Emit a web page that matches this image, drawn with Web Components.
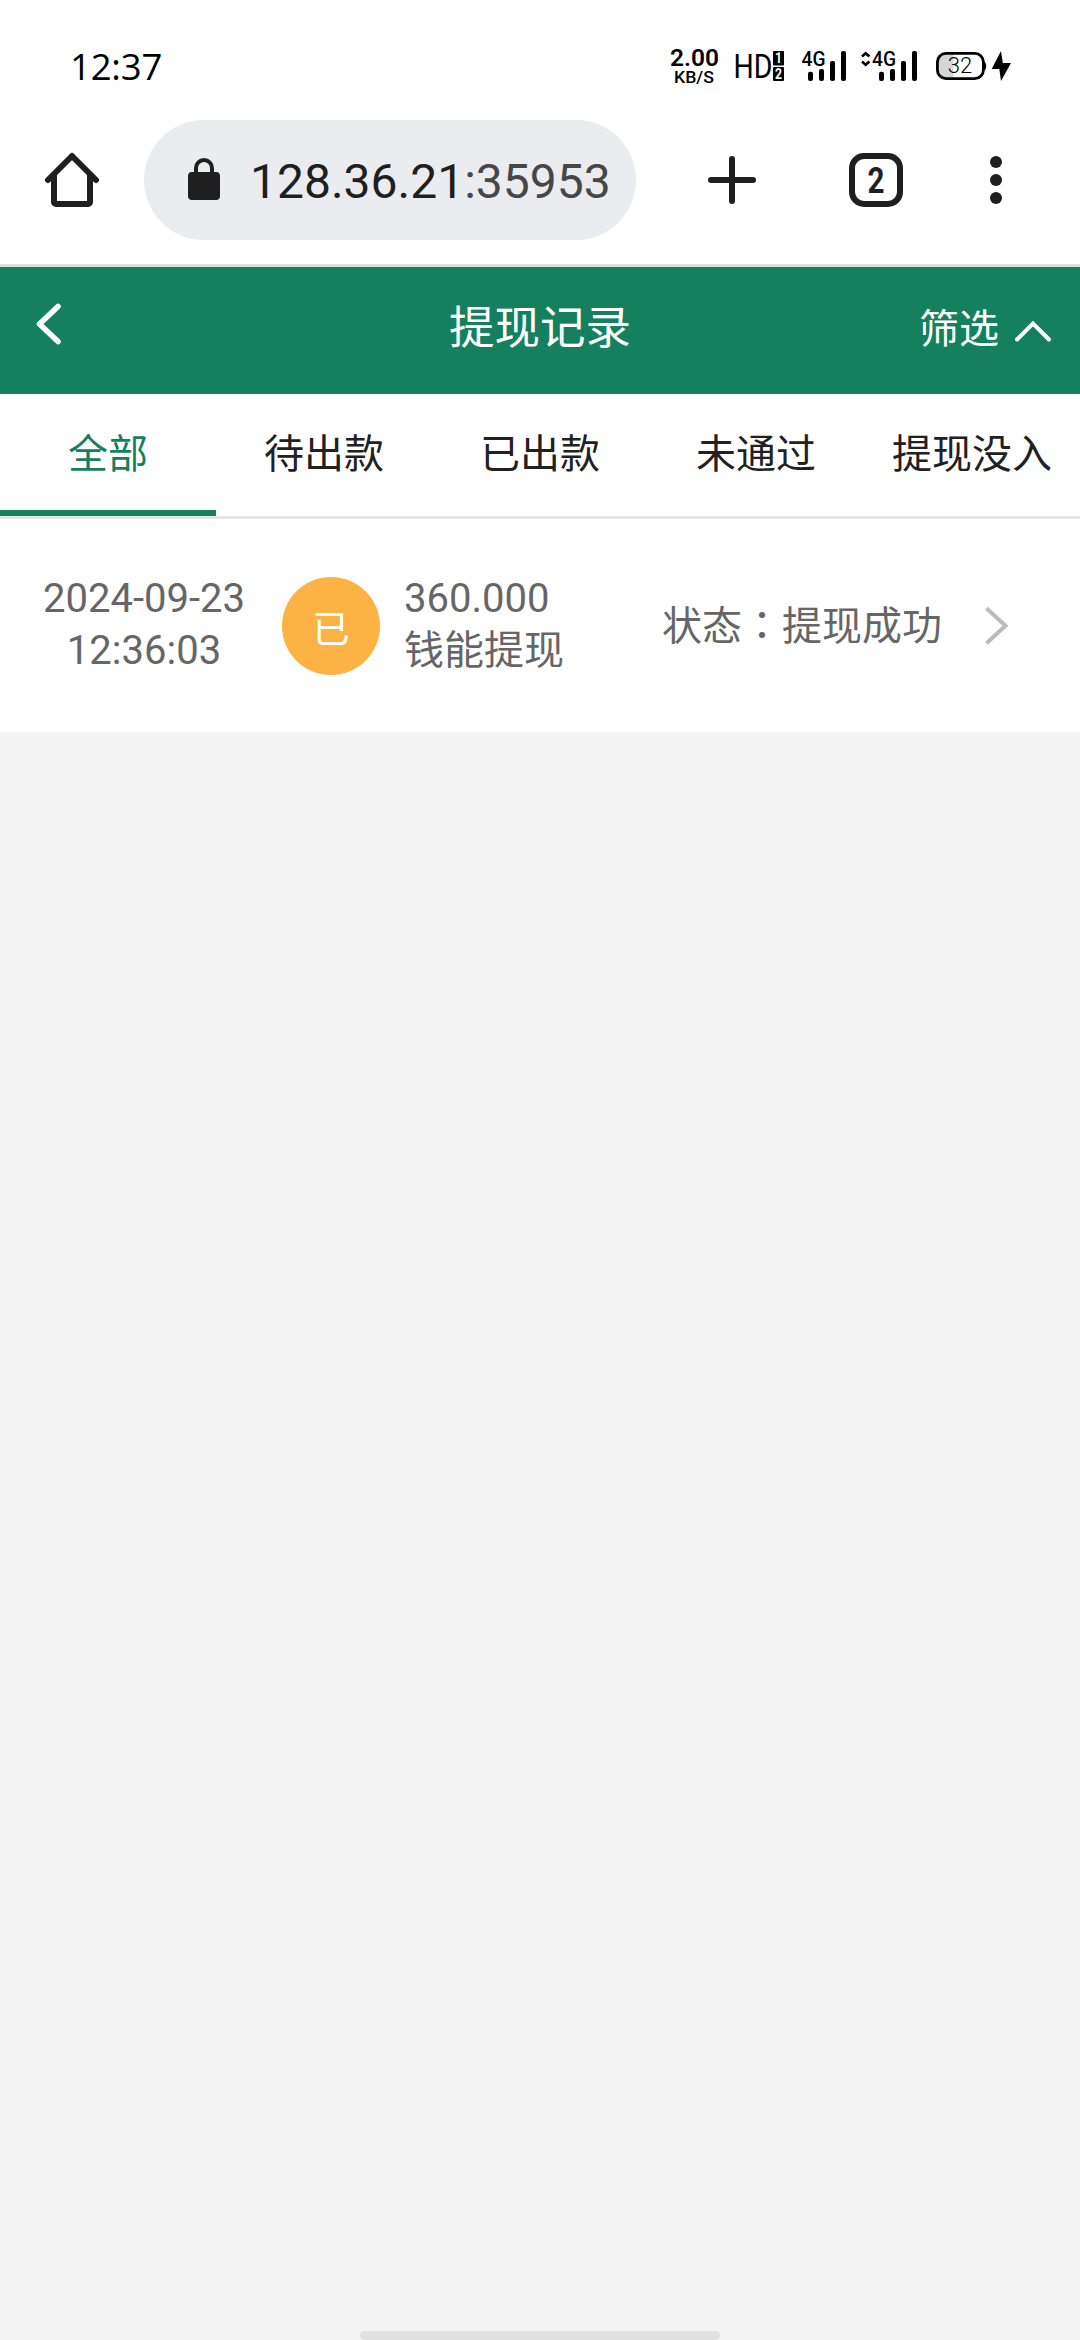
<!DOCTYPE html>
<html lang="zh-CN">
<head>
<meta charset="utf-8">
<title>提现记录</title>
<style>
html,body{margin:0;padding:0;height:100%;background:#f3f3f3}
body{font-family:Roboto,"Noto Sans CJK SC",sans-serif}
</style>
</head>
<body>
<app-screen></app-screen>
<script>
function define(name, html) {
  const t = document.createElement('template');
  t.innerHTML = html;
  customElements.define(name, class extends HTMLElement {
    constructor() {
      super();
      this.attachShadow({mode: 'open'}).appendChild(t.content.cloneNode(true));
    }
  });
}

define('status-bar', `
<style>
:host{display:flex;height:120px;background:#fff;align-items:flex-start;justify-content:space-between}
.clock{font:400 36.5px/50px "Open Sans",sans-serif;color:#000;padding:40.500px 0 0 70px;letter-spacing:-.2px}
svg{display:block;width:430px;height:120px;flex:none}
text{font-family:Roboto,sans-serif}
</style>
<div class="clock">12:37</div>
<svg viewBox="650 0 430 120">
  <text x="670" y="66" font-size="23.5" font-weight="600" textLength="49" lengthAdjust="spacingAndGlyphs">2.00</text>
  <text x="674" y="82.5" font-size="16.5" font-weight="500" textLength="40" lengthAdjust="spacingAndGlyphs">KB/S</text>
  <text x="733.5" y="78" font-size="33" textLength="39" lengthAdjust="spacingAndGlyphs">HD</text>
  <rect x="773" y="51" width="11" height="14.6" rx="1"/>
  <rect x="773" y="67" width="11" height="14" rx="1"/>
  <text x="775" y="63.200" font-size="14" font-weight="700" fill="#fff" textLength="7" lengthAdjust="spacingAndGlyphs">1</text>
  <text x="775" y="79" font-size="14" font-weight="700" fill="#fff" textLength="7" lengthAdjust="spacingAndGlyphs">2</text>
  <text x="801.5" y="65.7" font-size="19.5" font-weight="500" textLength="24" lengthAdjust="spacingAndGlyphs">4G</text>
  <g><rect x="808" y="71.7" width="5" height="9.3" rx="2"/><rect x="819" y="69" width="5" height="12" rx="2"/><rect x="830" y="61" width="5" height="20" rx="2"/><rect x="841" y="51" width="5" height="30" rx="2"/></g>
  <path d="M862 56.5l3.7-3.3 3.7 3.3M862 61.5l3.7 3.3 3.7-3.3" fill="none" stroke="#000" stroke-width="2.6"/>
  <text x="872" y="65.7" font-size="19.5" font-weight="500" textLength="24" lengthAdjust="spacingAndGlyphs">4G</text>
  <g><rect x="879" y="71.7" width="5" height="9.3" rx="2"/><rect x="890" y="69" width="5" height="12" rx="2"/><rect x="901" y="61" width="5" height="20" rx="2"/><rect x="912" y="51" width="5" height="30" rx="2"/></g>
  <path d="M953.3 54h-8a7.5 7.5 0 0 0-7.5 7.5v9a7.5 7.5 0 0 0 7.5 7.5h8z" fill="#d6d6d6"/>
  <rect x="937.4" y="53.4" width="46" height="25.2" rx="8.5" fill="none" stroke="#000" stroke-width="2.8"/>
  <path d="M983 60.5q3.2 1.5 3.2 5.5t-3.2 5.5z"/>
  <text x="960" y="73.3" font-size="22" font-weight="300" text-anchor="middle">32</text>
  <path d="M1001 51L991.7 69h7.6l1.7 12 10-18h-8.200z"/>
</svg>`);

define('browser-bar', `
<style>
:host{display:flex;height:144px;background:#fff;border-bottom:3px solid #d8e3de;box-sizing:content-box;align-items:flex-start}
svg{display:block;flex:none}
.home{width:144px;height:120px}
.pill{width:492px;height:120px;border-radius:60px;background:#ebecf0;display:flex;flex:none}
.lock{width:106px;height:120px}
.url{font:400 48px/120px Roboto,sans-serif;color:#1f1f1f;white-space:nowrap;padding-top:2px;height:118px}
.url span{color:#474747}
.tools{width:444px;height:120px}
</style>
<svg class="home" viewBox="0 120 144 120" fill="none" stroke="#1f1f1f" stroke-width="6" stroke-linejoin="round" stroke-linecap="round"><path d="M48 180L72 156L96 180"/><path d="M54 175V202a2 2 0 0 0 2 2H88a2 2 0 0 0 2-2V175"/></svg>
<div class="pill">
<svg class="lock" viewBox="144 120 106 120"><rect x="188" y="172" width="32" height="28" rx="4" fill="#1f1f1f"/><path d="M196 174v-6a8 8 0 0 1 16 0v6" fill="none" stroke="#1f1f1f" stroke-width="4"/></svg>
<div class="url">128.36.21<span>:35953</span></div>
</div>
<svg class="tools" viewBox="636 120 444 120" fill="none" stroke="#1f1f1f" stroke-width="6" stroke-linecap="round"><path d="M711 180H753M732 159V201"/><rect x="852" y="156" width="48" height="48" rx="12"/><g fill="#1f1f1f" stroke="none"><circle cx="996" cy="162" r="6"/><circle cx="996" cy="180" r="6"/><circle cx="996" cy="198" r="6"/><text x="867.500" y="193" font-family="Roboto" font-weight="700" font-size="36" textLength="17" lengthAdjust="spacingAndGlyphs">2</text></g></svg>`);

define('page-header', `
<style>
:host{display:flex;height:127px;background:#15805e;color:#fff;align-items:stretch}
svg{display:block;flex:none}
.side{flex:1 1 0;display:flex}
.right{justify-content:flex-end}
.title{font-size:45.5px;line-height:60px;padding-top:32px}
.filter{font-size:40px;line-height:60px;padding-top:33px}
</style>
<div class="side"><svg width="90" height="127" viewBox="0 267 90 127" fill="none" stroke="#fff" stroke-width="5.500" stroke-linecap="round" stroke-linejoin="round"><path d="M58 306.500L39.500 324L58 341.500"/></svg></div>
<div class="title"><slot></slot></div>
<div class="side right"><div class="filter"><slot name="action"></slot></div><svg width="81" height="127" viewBox="999 267 81 127" fill="none" stroke="#fff" stroke-width="4" stroke-linecap="round"><path d="M1017 339.500L1033 323.500L1049 339.500"/></svg></div>`);

define('tab-item', `
<style>
:host{flex:1 1 0;display:flex;justify-content:center;box-sizing:border-box;height:122px;padding-top:31px;font-size:40px;line-height:60px;color:#212121;white-space:nowrap;border-bottom:6px solid transparent}
:host([active]){color:#15805e;border-bottom-color:#15805e}
</style><slot></slot>`);

define('tab-strip', `
<style>:host{display:flex;background:#fff;border-bottom:3px solid #e5e5e5}</style><slot></slot>`);

define('record-row', `
<style>
:host{display:flex;height:213px;background:#fff;color:#666;font-size:40px;line-height:52px;align-items:flex-start;white-space:nowrap}
.when{width:204px;margin-left:42px;padding-top:54px;text-align:center}
.badge{width:98px;height:98px;border-radius:50%;background:#fdb344;color:#fff;font-size:37px;line-height:107px;text-align:center;margin:58px 24px 0 36px}
.info{padding-top:54px;width:258px}
.state{line-height:60px;padding-top:78px;width:280px}
svg{display:block;margin-left:38px}
</style>
<div class="when"><slot name="date"></slot><br><slot name="time"></slot></div>
<div class="badge"><slot name="badge"></slot></div>
<div class="info"><slot name="amount"></slot><br><slot name="kind"></slot></div>
<div class="state"><slot name="state"></slot></div>
<svg width="40" height="213" viewBox="980 519 40 213" fill="none" stroke="#bbb" stroke-width="4"><path d="M986.500 608.300L1005.500 625.700L986.500 643.300"/></svg>`);

define('home-handle', `
<style>:host{display:block;width:360px;height:9px;border-radius:5px;background:#e0e0e0;margin:auto auto 0}</style>`);

define('app-screen', `
<style>:host{display:flex;flex-direction:column;width:1080px;height:2340px;background:#f3f3f3;overflow:hidden}
.colon{font-family:"Noto Sans CJK TC",sans-serif;line-height:1}
status-bar,browser-bar,page-header,tab-strip,record-row{flex:none}</style>
<status-bar></status-bar>
<browser-bar></browser-bar>
<page-header>提现记录<span slot="action">筛选</span></page-header>
<tab-strip><tab-item active>全部</tab-item><tab-item>待出款</tab-item><tab-item>已出款</tab-item><tab-item>未通过</tab-item><tab-item>提现没入</tab-item></tab-strip>
<record-row><span slot="date">2024-09-23</span><span slot="time">12:36:03</span><span slot="badge">已</span><span slot="amount">360.000</span><span slot="kind">钱能提现</span><span slot="state">状态<span class="colon" lang="zh-TW">：</span>提现成功</span></record-row>
<home-handle></home-handle>`);
</script>
</body>
</html>
